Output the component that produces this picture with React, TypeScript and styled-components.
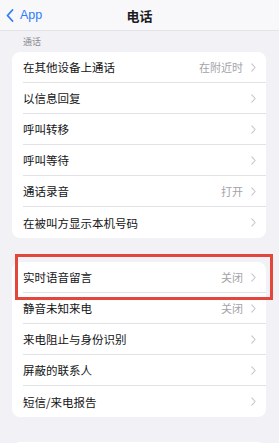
import styled, { createGlobalStyle } from "styled-components";

const GlobalStyle = createGlobalStyle`
  html, body {
    margin: 0;
    padding: 0;
    background: #f1f1f6;
  }
  body {
    font-family: "Noto Sans CJK SC", "Noto Sans", sans-serif;
    -webkit-font-smoothing: antialiased;
  }
`;

const Page = styled.div`
  position: relative;
  width: 279px;
  height: 443px;
  overflow: hidden;
  background: #f1f1f6;
`;

const NavBar = styled.div`
  height: 31px;
  display: grid;
  grid-template-columns: 1fr auto 1fr;
  align-items: center;
  background: #f8f8fa;
  border-bottom: 1px solid #e4e4e8;
  box-sizing: border-box;
`;

const BackButton = styled.div`
  display: flex;
  align-items: center;
  gap: 6px;
  padding-left: 6px;
  color: #2f7cf6;
  font-family: "Liberation Sans", "Noto Sans", sans-serif;
  font-size: 12.5px;
`;

const Title = styled.div`
  font-size: 13px;
  font-weight: 600;
  color: #1c1c1e;
`;

const SectionLabel = styled.div`
  height: 21px;
  padding-left: 23px;
  display: flex;
  align-items: center;
  font-size: 9px;
  color: #8c8c92;
`;

const Card = styled.div<{ $gapTop?: number }>`
  margin: ${(p) => p.$gapTop ?? 0}px 13px 0 12px;
  background: #ffffff;
  border-radius: 8px;
  overflow: hidden;
`;

const Row = styled.div<{ $last?: boolean }>`
  height: 31px;
  margin-left: 11px;
  padding-right: 10px;
  display: flex;
  align-items: center;
  box-sizing: border-box;
  border-bottom: ${(p) => (p.$last ? "none" : "0.5px solid #e2e2e6")};
`;

const Label = styled.div`
  flex: 1;
  font-size: 11.5px;
  color: #141416;
`;

const Value = styled.div`
  font-size: 11px;
  color: #a3a3a8;
  margin-right: 8px;
`;

const Chevron = styled.svg`
  width: 5px;
  height: 9px;
  flex: none;
`;

const Highlight = styled.div`
  position: absolute;
  left: 15px;
  top: 254px;
  width: 258px;
  height: 46px;
  border: 3px solid #e3473b;
  box-sizing: border-box;
`;

type Item = { label: string; value?: string };

const calls: Item[] = [
  { label: "在其他设备上通话", value: "在附近时" },
  { label: "以信息回复" },
  { label: "呼叫转移" },
  { label: "呼叫等待" },
  { label: "通话录音", value: "打开" },
  { label: "在被叫方显示本机号码" },
];

const more: Item[] = [
  { label: "实时语音留言", value: "关闭" },
  { label: "静音未知来电", value: "关闭" },
  { label: "来电阻止与身份识别" },
  { label: "屏蔽的联系人" },
  { label: "短信/来电报告" },
];

const RowChevron = () => (
  <Chevron viewBox="0 0 5 9">
    <path d="M0.8 0.8 L4.2 4.5 L0.8 8.2" fill="none" stroke="#c5c5ca" strokeWidth="1.1" strokeLinecap="round" strokeLinejoin="round" />
  </Chevron>
);

const List = ({ items }: { items: Item[] }) => (
  <>
    {items.map((it, i) => (
      <Row key={it.label} $last={i === items.length - 1}>
        <Label>{it.label}</Label>
        {it.value && <Value>{it.value}</Value>}
        <RowChevron />
      </Row>
    ))}
  </>
);

const App = () => {
  return (
    <Page>
      <GlobalStyle />
      <NavBar>
        <BackButton>
          <svg width="8" height="13" viewBox="0 0 8 13">
            <path d="M6.5 1 L1.5 6.5 L6.5 12" fill="none" stroke="#2f7cf6" strokeWidth="1.8" strokeLinecap="round" strokeLinejoin="round" />
          </svg>
          App
        </BackButton>
        <Title>电话</Title>
        <div />
      </NavBar>
      <SectionLabel>通话</SectionLabel>
      <Card>
        <List items={calls} />
      </Card>
      <Card $gapTop={24}>
        <List items={more} />
      </Card>
      <Card $gapTop={25}>
        <Row $last />
      </Card>
      <Highlight />
    </Page>
  );
};

export default App;
